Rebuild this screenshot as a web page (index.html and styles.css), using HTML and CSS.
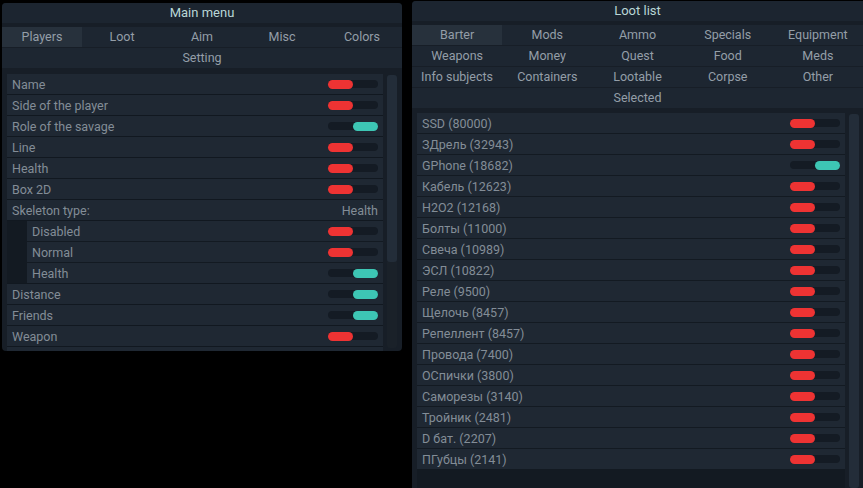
FILE: index.html
```html
<!DOCTYPE html>
<html>
<head>
<meta charset="utf-8">
<link rel="stylesheet" href="styles.css">
</head>
<body>
<div class="desk">
  <section class="win win-main">
    <div class="title">Main menu</div>
    <div class="tabs cols5">
      <div class="tab active">Players</div>
      <div class="tab">Loot</div>
      <div class="tab">Aim</div>
      <div class="tab">Misc</div>
      <div class="tab">Colors</div>
    </div>
    <div class="tabs cols1 sub">
      <div class="tab">Setting</div>
    </div>
    <div class="body">
      <div class="list">
        <div class="row"><span>Name</span><i class="tg off"></i></div>
        <div class="row"><span>Side of the player</span><i class="tg off"></i></div>
        <div class="row"><span>Role of the savage</span><i class="tg on"></i></div>
        <div class="row"><span>Line</span><i class="tg off"></i></div>
        <div class="row"><span>Health</span><i class="tg off"></i></div>
        <div class="row"><span>Box 2D</span><i class="tg off"></i></div>
        <div class="row"><span>Skeleton type:</span><span class="val">Health</span></div>
        <div class="group">
          <div class="row"><span>Disabled</span><i class="tg off"></i></div>
          <div class="row"><span>Normal</span><i class="tg off"></i></div>
          <div class="row"><span>Health</span><i class="tg on"></i></div>
        </div>
        <div class="row"><span>Distance</span><i class="tg on"></i></div>
        <div class="row"><span>Friends</span><i class="tg on"></i></div>
        <div class="row"><span>Weapon</span><i class="tg off"></i></div>
        <div class="row"><span></span><i class="tg off"></i></div>
      </div>
      <div class="scroll"><div class="thumb thumb-main"></div></div>
    </div>
  </section>

  <section class="win win-loot">
    <div class="title">Loot list</div>
    <div class="tabs cols5">
      <div class="tab active">Barter</div>
      <div class="tab">Mods</div>
      <div class="tab">Ammo</div>
      <div class="tab">Specials</div>
      <div class="tab">Equipment</div>
    </div>
    <div class="tabs cols5">
      <div class="tab">Weapons</div>
      <div class="tab">Money</div>
      <div class="tab">Quest</div>
      <div class="tab">Food</div>
      <div class="tab">Meds</div>
    </div>
    <div class="tabs cols5">
      <div class="tab">Info subjects</div>
      <div class="tab">Containers</div>
      <div class="tab">Lootable</div>
      <div class="tab">Corpse</div>
      <div class="tab">Other</div>
    </div>
    <div class="tabs cols1 sub">
      <div class="tab">Selected</div>
    </div>
    <div class="body">
      <div class="list">
        <div class="row"><span>SSD (80000)</span><i class="tg off"></i></div>
        <div class="row"><span>ЗДрель (32943)</span><i class="tg off"></i></div>
        <div class="row"><span>GPhone (18682)</span><i class="tg on"></i></div>
        <div class="row"><span>Кабель (12623)</span><i class="tg off"></i></div>
        <div class="row"><span>H2O2 (12168)</span><i class="tg off"></i></div>
        <div class="row"><span>Болты (11000)</span><i class="tg off"></i></div>
        <div class="row"><span>Свеча (10989)</span><i class="tg off"></i></div>
        <div class="row"><span>ЭСЛ (10822)</span><i class="tg off"></i></div>
        <div class="row"><span>Реле (9500)</span><i class="tg off"></i></div>
        <div class="row"><span>Щелочь (8457)</span><i class="tg off"></i></div>
        <div class="row"><span>Репеллент (8457)</span><i class="tg off"></i></div>
        <div class="row"><span>Провода (7400)</span><i class="tg off"></i></div>
        <div class="row"><span>ОСпички (3800)</span><i class="tg off"></i></div>
        <div class="row"><span>Саморезы (3140)</span><i class="tg off"></i></div>
        <div class="row"><span>Тройник (2481)</span><i class="tg off"></i></div>
        <div class="row"><span>D бат. (2207)</span><i class="tg off"></i></div>
        <div class="row"><span>ПГубцы (2141)</span><i class="tg off"></i></div>
      </div>
      <div class="scroll"><div class="thumb thumb-loot"></div></div>
    </div>
  </section>
</div>
</body>
</html>
```

FILE: styles.css
```css
* { box-sizing: border-box; }
html, body { margin: 0; padding: 0; background: #000; }
body {
  width: 863px;
  height: 488px;
  overflow: hidden;
  font-family: Roboto, "Noto Sans", sans-serif;
  font-size: 12.5px;
  color: #838d97;
}
.desk {
  display: flex;
  align-items: flex-start;
  gap: 10px;
  padding-left: 2px;
}
.win {
  flex: none;
  background: #171e27;
  border-radius: 4px;
  display: flex;
  flex-direction: column;
  overflow: hidden;
}
.win-main {
  width: 400px;
  height: 348px;
  margin-top: 3px;
}
.win-loot {
  width: 451px;
  height: 490px;
  margin-top: 1px;
  border-radius: 4px 0 0 0;
}
.title {
  flex: none;
  height: 20px;
  line-height: 20px;
  text-align: center;
  background: #1c2530;
  color: #b9d6d6;
  font-size: 13px;
  margin-bottom: 4px;
}
.tabs {
  flex: none;
  display: grid;
  background: #1d2631;
  margin-bottom: 1px;
}
.cols5 { grid-template-columns: repeat(5, 1fr); }
.cols1 { grid-template-columns: 1fr; }
.tab {
  height: 20px;
  line-height: 20px;
  text-align: center;
  color: #949ea8;
  white-space: nowrap;
}
.tab.active { background: #27313c; }
.tabs.sub { margin-bottom: 6px; }
.win-loot .tabs.sub { margin-bottom: 5px; }
.body {
  flex: 1;
  display: flex;
  gap: 4px;
  padding: 0 5px 0 5px;
  min-height: 0;
}
.win-loot .body { padding-right: 4px; }
.list {
  flex: 1;
  display: flex;
  flex-direction: column;
  gap: 1px;
  overflow: hidden;
  background: #111820;
  min-height: 0;
}
.row {
  flex: none;
  height: 20px;
  display: flex;
  align-items: center;
  justify-content: space-between;
  padding: 0 5px;
  background: #1f2833;
}
.group {
  display: flex;
  flex-direction: column;
  gap: 1px;
  padding-left: 20px;
  background: #131a22;
}
.val { color: #838d97; }
.tg {
  position: relative;
  width: 50px;
  height: 8px;
  border-radius: 4px;
  background: #141b24;
}
.tg::after {
  content: "";
  position: absolute;
  top: -0.5px;
  width: 25px;
  height: 9px;
  border-radius: 4.5px;
}
.tg.off::after { left: 0; background: #ee3333; }
.tg.on::after { right: 0; background: #3dc6b4; }
.scroll {
  width: 10px;
  flex: none;
  background: #1a2129;
  border-radius: 3px;
  margin-top: 1px;
  margin-bottom: 3px;
}
.thumb {
  background: #232d39;
  border-radius: 3px;
}
.thumb-main { height: 187px; }
.thumb-loot { height: 100%; }
.win-loot .list { background: #131a22; }
```
